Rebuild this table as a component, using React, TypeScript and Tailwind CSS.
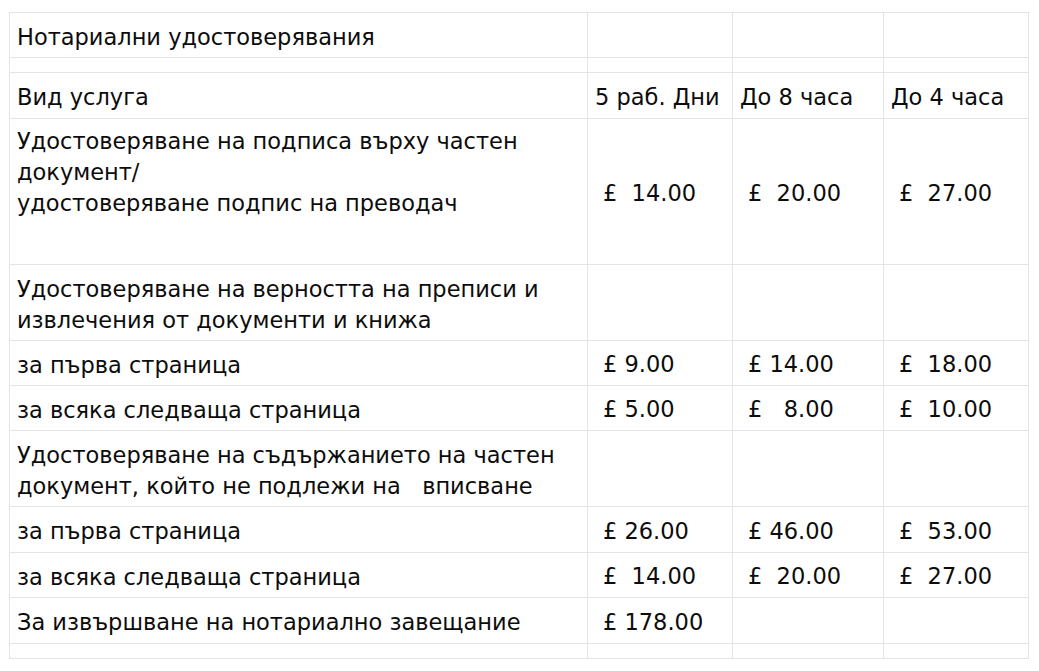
const rows: { label: string[]; prices: string[]; h: number; top?: boolean }[] = [
  { label: ["Нотариални удостоверявания"], prices: ["", "", ""], h: 45 },
  { label: [], prices: ["", "", ""], h: 15 },
  { label: ["Вид услуга"], prices: [], h: 46 },
  {
    label: [
      "Удостоверяване на подписа върху частен",
      "документ/",
      "удостоверяване подпис на преводач",
    ],
    prices: ["£  14.00", "£  20.00", "£  27.00"],
    h: 146,
    top: true,
  },
  {
    label: ["Удостоверяване на верността на преписи и", "извлечения от документи и книжа"],
    prices: ["", "", ""],
    h: 76,
  },
  { label: ["за първа страница"], prices: ["£ 9.00", "£ 14.00", "£  18.00"], h: 45 },
  { label: ["за всяка следваща страница"], prices: ["£ 5.00", "£   8.00", "£  10.00"], h: 45 },
  {
    label: [
      "Удостоверяване на съдържанието на частен",
      "документ, който не подлежи на   вписване",
    ],
    prices: ["", "", ""],
    h: 76,
  },
  { label: ["за първа страница"], prices: ["£ 26.00", "£ 46.00", "£  53.00"], h: 46 },
  { label: ["за всяка следваща страница"], prices: ["£  14.00", "£  20.00", "£  27.00"], h: 45 },
  { label: ["За извършване на нотариално завещание"], prices: ["£ 178.00", "", ""], h: 46 },
  { label: [], prices: ["", "", ""], h: 15 },
];

const headers = ["5 раб. Дни", "До 8 часа", "До 4 часа"];

export default function App() {
  return (
    <div className="min-h-screen bg-white pl-[9px] pt-3">
      <table
        className="table-fixed border-collapse text-[22.5px] leading-[31px] text-[#0c0c0c]"
        style={{ fontFamily: '"DejaVu Sans", Verdana, sans-serif' }}
      >
        <colgroup>
          <col className="w-[578px]" />
          <col className="w-[145px]" />
          <col className="w-[151px]" />
          <col className="w-[145px]" />
        </colgroup>
        <tbody>
          {rows.map((r, i) => (
            <tr key={i} style={{ height: r.h }}>
              <td
                className={`border border-[#e2e5e7] p-0 pl-[7px] whitespace-pre ${
                  r.top ? "align-top pt-[7px]" : "align-middle pt-[4px]"
                }`}
              >
                {r.label.map((l, j) => (
                  <div key={j}>{l}</div>
                ))}
              </td>
              {r.prices.length === 0
                ? headers.map((h) => (
                    <td
                      key={h}
                      className="border border-[#e2e5e7] p-0 pl-[7px] pt-[4px] align-middle whitespace-pre"
                    >
                      {h}
                    </td>
                  ))
                : r.prices.map((p, j) => (
                    <td
                      key={j}
                      className="border border-[#e2e5e7] p-0 pl-[15px] pt-[3px] align-middle whitespace-pre"
                    >
                      {p}
                    </td>
                  ))}
            </tr>
          ))}
        </tbody>
      </table>
    </div>
  );
}
